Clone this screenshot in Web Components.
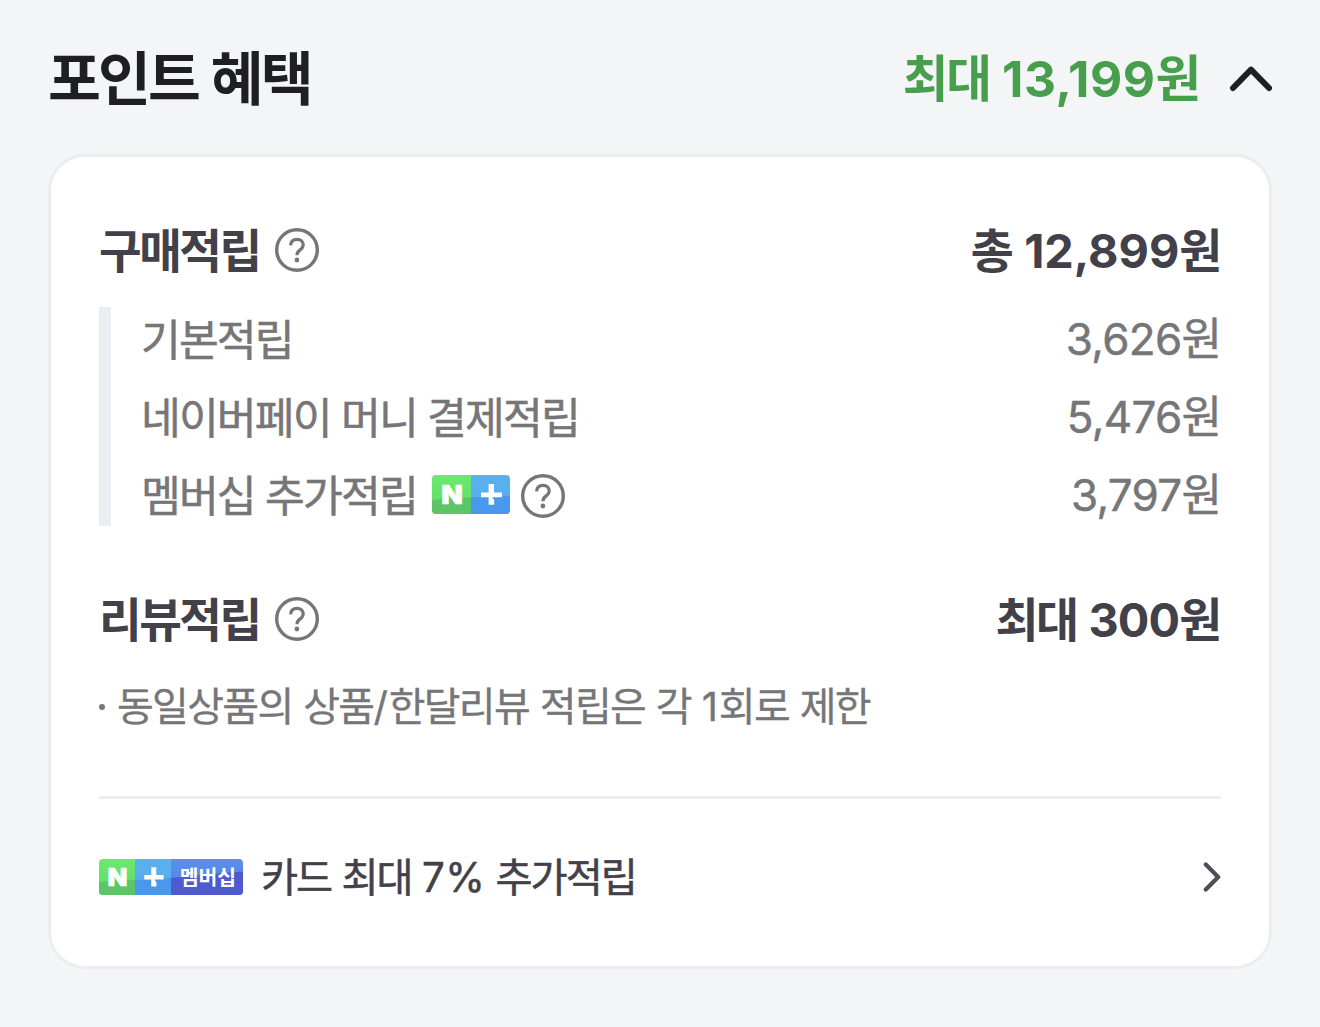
<!DOCTYPE html>
<html lang="ko">
<head>
<meta charset="utf-8">
<title>포인트 혜택</title>
<style>
  body {
    margin: 0;
    background: #f3f5f7;
    color: #424149;
    font-family: Inter, "Noto Sans CJK KR", sans-serif;
  }
</style>
</head>
<body>
<point-panel>
  <span slot="title">포인트 혜택</span>
  <ko-text slot="total" size="49.7" track="-2.2" num="0.5" word="2.5" weight="700">최대 13,199원</ko-text>

  <point-heading>
    <ko-text size="46.4" track="-2.5" weight="700">구매적립</ko-text>
    <help-icon></help-icon>
    <ko-text slot="value" size="46.8" track="-2.4" num="0" word="4" weight="700">총 12,899원</ko-text>
  </point-heading>
  <point-list>
    <point-row>
      <ko-text size="43.3" track="-1.9" stroke="0.5">기본적립</ko-text>
      <ko-text slot="value" size="44" track="-2" num="-0.7" stroke="0.5">3,626원</ko-text>
    </point-row>
    <point-row>
      <ko-text size="43.3" track="-1.9" stroke="0.5">네이버페이 머니 결제적립</ko-text>
      <ko-text slot="value" size="44" track="-2" num="-0.7" stroke="0.5">5,476원</ko-text>
    </point-row>
    <point-row>
      <ko-text size="43.3" track="-1.9" stroke="0.5">멤버십 추가적립</ko-text>
      <plus-badge></plus-badge>
      <help-icon></help-icon>
      <ko-text slot="value" size="44" track="-2" num="-0.7" stroke="0.5">3,797원</ko-text>
    </point-row>
  </point-list>

  <point-heading class="review">
    <ko-text size="46.4" track="-2.5" weight="700">리뷰적립</ko-text>
    <help-icon></help-icon>
    <ko-text slot="value" size="46.8" track="-2.4" num="-0.8" word="3" weight="700">최대 300원</ko-text>
  </point-heading>
  <point-note><ko-text size="40" track="-1.7" num="0.8" word="1.2" stroke="0.3">동일상품의 상품/한달리뷰 적립은 각 1회로 제한</ko-text></point-note>

  <card-link slot="footer">
    <plus-badge wide></plus-badge>
    <ko-text size="40.3" track="-2" num="0.4" word="1" stroke="0.5">카드 최대 7% 추가적립</ko-text>
  </card-link>
</point-panel>

<script>
/**
 * Base element: renders the static template of the subclass.
 */
class BaseElement extends HTMLElement {
  constructor() {
    super();
    this.attachShadow({ mode: 'open' });
    const template = document.createElement('template');
    template.innerHTML = this.constructor.markup;
    this.shadowRoot.appendChild(template.content.cloneNode(true));
  }
}

/**
 * Korean text where the digits are tracked apart from the Hangul.
 *
 * Attributes: size, track, num (digit tracking), word (word spacing),
 * weight, stroke (extra thickness).
 */
class KoText extends HTMLElement {
  connectedCallback() {
    if (this.shadowRoot) {
      return;
    }
    this.attachShadow({ mode: 'open' });
    const size = this.getAttribute('size');
    const track = this.getAttribute('track');
    const num = this.getAttribute('num') || track;
    const word = this.getAttribute('word') || 0;
    const weight = this.getAttribute('weight') || 400;
    const stroke = this.getAttribute('stroke') || 0;
    const html = this.textContent.replace(/[\d,%/]+/g, '<span>$&</span>');
    this.shadowRoot.innerHTML = `<style>
        :host {
          display: block;
          padding-top: 2px;
          white-space: nowrap;
          font-size: ${size}px;
          font-weight: ${weight};
          letter-spacing: ${track}px;
          word-spacing: ${word}px;
          line-height: 1.3;
          -webkit-text-stroke: ${stroke}px currentColor;
        }

        span {
          letter-spacing: ${num}px;
        }
      </style>${html}`;
  }
}

/**
 * Circled question mark.
 */
class HelpIcon extends BaseElement {
  static markup = `
    <style>
      :host {
        display: block;
        width: 44px;
        height: 44px;
      }

      svg {
        display: block;
      }
    </style>
    <svg width="44" height="44" viewBox="0 0 44 44" fill="none" stroke="#767678">
      <circle cx="22" cy="22" r="20.3" stroke-width="3.4"/>
      <path d="M15.6 17.4c.2-3.9 2.7-6.1 6.4-6.1 3.8 0 6.2 2.3 6.2 5.5 0 2.5-1.2 3.8-3.3 5.3-2.2 1.5-2.9 2.5-2.9 5.1" stroke-width="3.2"/>
      <circle cx="21.9" cy="32" r="2.4" fill="#767678" stroke="none"/>
    </svg>`;
}

/**
 * Membership badge. The wide attribute adds the membership label.
 */
class PlusBadge extends HTMLElement {
  connectedCallback() {
    if (this.shadowRoot) {
      return;
    }
    this.attachShadow({ mode: 'open' });
    const wide = this.hasAttribute('wide');
    const width = wide ? 144 : 78;
    const height = wide ? 36 : 39;
    const viewWidth = wide ? 156 : 78;
    const label = wide ? `
      <rect x="78" width="78" height="39" fill="url(#p)"/>
      <path d="M78 20.5C103 18 130 15.5 156 13.5V39H78z" fill="#4f59d2"/>
      <text x="87.5" y="28" font-family="Noto Sans CJK KR, sans-serif" font-size="22" font-weight="700" textLength="61" lengthAdjust="spacingAndGlyphs">멤버십</text>` : '';
    this.shadowRoot.innerHTML = `
      <style>
        :host {
          display: block;
          width: ${width}px;
          height: ${height}px;
          border-radius: 4px;
          overflow: hidden;
        }

        svg {
          display: block;
        }
      </style>
      <svg width="${width}" height="${height}" viewBox="0 0 ${viewWidth} 39" fill="#fff">
        <defs>
          <linearGradient id="g" x2="0" y2="1"><stop stop-color="#6bea6e"/><stop offset="1" stop-color="#60d96b"/></linearGradient>
          <linearGradient id="b" x2="0" y2="1"><stop stop-color="#59b1ee"/><stop offset="1" stop-color="#57aaf0"/></linearGradient>
          <linearGradient id="p" x2="0" y2="1"><stop stop-color="#5c8eea"/><stop offset="1" stop-color="#5682e6"/></linearGradient>
        </defs>
        <rect width="39" height="39" fill="url(#g)"/>
        <rect x="39" width="39" height="39" fill="url(#b)"/>
        <path d="M0 25.2C12 23.6 26 23 39 22.6V39H0z" fill="#5bc568"/>
        <path d="M39 22.6C53 22.4 66 21.8 78 20.5V39H39z" fill="#4a97ee"/>
        <text x="9.2" y="29" font-family="Inter, sans-serif" font-size="26" font-weight="900" stroke="#fff" stroke-width=".6" textLength="21.6" lengthAdjust="spacingAndGlyphs">N</text>
        <path d="M56.6 9h5.4v8.4h8v4.8h-9.4v1c1 .4 1.6 1.4 1.6 2.8v3.8h-5.6v-7.6H49v-4.8h7.6z"/>
        ${label}
      </svg>`;
  }
}

/**
 * Section heading with its amount.
 */
class PointHeading extends BaseElement {
  static markup = `
    <style>
      :host {
        display: flex;
        align-items: center;
        justify-content: space-between;
        height: 66px;
        color: #424149;
      }

      :host(.review) {
        margin-top: 60px;
      }

      .name {
        display: flex;
        align-items: center;
        gap: 15px;
      }

      ::slotted([slot="value"]) {
        margin-right: 1px;
      }
    </style>
    <div class="name"><slot></slot></div>
    <slot name="value"></slot>`;
}

/**
 * Indented list with a bar on its left.
 */
class PointList extends BaseElement {
  static markup = `
    <style>
      :host {
        display: flex;
        flex-direction: column;
        gap: 16px;
        margin-top: 24px;
        padding: 1px 0 0 30px;
        border-left: 12px solid #ecedf1;
        color: #767678;
      }
    </style>
    <slot></slot>`;
}

/**
 * One line of the list.
 */
class PointRow extends BaseElement {
  static markup = `
    <style>
      :host {
        display: flex;
        align-items: center;
        justify-content: space-between;
        height: 62px;
      }

      .name {
        display: flex;
        align-items: center;
      }

      ::slotted(plus-badge) {
        margin: -2px 0 0 15px;
      }

      ::slotted(help-icon) {
        margin: 1px 0 0 11px;
      }

      ::slotted([slot="value"]) {
        margin-right: 1px;
      }
    </style>
    <div class="name"><slot></slot></div>
    <slot name="value"></slot>`;
}

/**
 * Footnote with a small dot.
 */
class PointNote extends BaseElement {
  static markup = `
    <style>
      :host {
        display: flex;
        align-items: center;
        height: 56px;
        margin-top: 26px;
        color: #767678;
      }

      i {
        width: 6px;
        height: 6px;
        margin: 1px 12px 0 0;
        border-radius: 50%;
        background: #767678;
      }
    </style>
    <i></i><slot></slot>`;
}

/**
 * Link line at the bottom of the card.
 */
class CardLink extends BaseElement {
  static markup = `
    <style>
      :host {
        display: flex;
        align-items: center;
        justify-content: space-between;
        height: 156px;
        margin-top: 62px;
        border-top: 3px solid #ecedf1;
        color: #424149;
      }

      .name {
        display: flex;
        align-items: center;
        gap: 18px;
      }
    </style>
    <div class="name"><slot></slot></div>
    <svg width="20" height="32" viewBox="0 0 20 32" fill="none" stroke="#4d5157" stroke-width="4.3" stroke-linecap="round" stroke-linejoin="round">
      <path d="M4.8 3.6L17.2 16 4.8 28.4"/>
    </svg>`;
}

class PointPanel extends BaseElement {
  static markup = `
    <style>
      :host {
        display: flex;
        flex-direction: column;
        box-sizing: border-box;
        height: 1027px;
        padding: 0 48px 58px;
      }

      header {
        display: flex;
        align-items: center;
        justify-content: space-between;
        box-sizing: border-box;
        height: 154px;
        padding-top: 3px;
      }

      h1 {
        margin: 0;
        padding-top: 2px;
        font-size: 57.5px;
        line-height: 1.3;
        letter-spacing: -2.9px;
        word-spacing: 2px;
        color: #1e1e23;
      }

      .total {
        display: flex;
        align-items: center;
        gap: 30px;
        margin-right: -1px;
        color: #479e4c;
      }

      section {
        flex: 1;
        box-sizing: border-box;
        padding: 60px 48px 0;
        border: 3px solid #ecedf1;
        border-radius: 37px;
        background: #fff;
      }
    </style>
    <header>
      <h1><slot name="title"></slot></h1>
      <div class="total">
        <slot name="total"></slot>
        <svg width="44" height="28" viewBox="0 0 44 28" fill="none" stroke="#1e1e23" stroke-width="6" stroke-linecap="round" stroke-linejoin="round">
          <path d="M4 24L22 5.6 40 24"/>
        </svg>
      </div>
    </header>
    <section>
      <slot></slot>
      <slot name="footer"></slot>
    </section>`;
}

customElements.define('ko-text', KoText);
customElements.define('help-icon', HelpIcon);
customElements.define('plus-badge', PlusBadge);
customElements.define('point-heading', PointHeading);
customElements.define('point-list', PointList);
customElements.define('point-row', PointRow);
customElements.define('point-note', PointNote);
customElements.define('card-link', CardLink);
customElements.define('point-panel', PointPanel);
</script>
</body>
</html>
